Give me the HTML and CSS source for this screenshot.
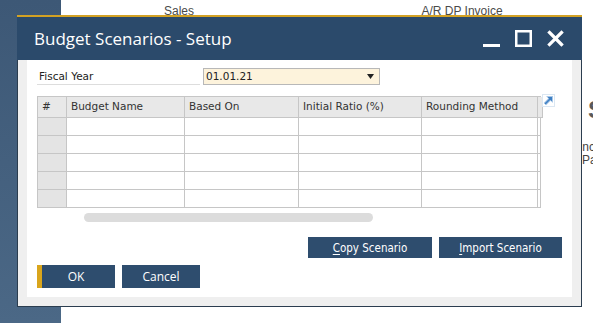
FILE: index.html
```html
<!DOCTYPE html>
<html lang="en">
<head>
    <meta charset="UTF-8">
    <meta name="viewport" content="width=device-width, initial-scale=1.0">
    <title>Budget Scenarios - Setup</title>
    <link rel="stylesheet" href="styles.css">
</head>
<body>
    <!-- background: main window behind the dialog -->
    <div class="desk">
        <div class="rail"></div>
        <div class="page">
            <div class="tabs">
                <span class="tab tab-sales">Sales</span>
                <span class="tab tab-invoice">A/R DP Invoice</span>
            </div>
            <div class="peek">
                <div class="peek-big">S</div>
                <div class="peek-line inc">Inc</div>
                <div class="peek-line">Pa</div>
            </div>
        </div>
    </div>

    <!-- dialog -->
    <div class="dialog">
        <div class="titlebar">
            <span class="title">Budget Scenarios - Setup</span>
            <div class="winctl">
                <svg class="ctl" width="17" height="17" viewBox="0 0 17 17"><rect x="0" y="14" width="17" height="3" fill="#fff"/></svg>
                <svg class="ctl" width="17" height="17" viewBox="0 0 17 17"><rect x="1.25" y="1.25" width="14.5" height="14.5" fill="none" stroke="#fff" stroke-width="2.5"/></svg>
                <svg class="ctl" width="17" height="17" viewBox="0 0 17 17"><path d="M2.5 2.5 L14.5 14.5 M14.5 2.5 L2.5 14.5" stroke="#fff" stroke-width="3.2" stroke-linecap="square"/></svg>
            </div>
        </div>

        <div class="frame">
            <div class="panel">

                <div class="fiscal">
                    <div class="fiscal-label">Fiscal Year</div>
                    <div class="combo">
                        <span>01.01.21</span>
                        <svg width="7" height="5" viewBox="0 0 7 5"><polygon points="0,0 7,0 3.5,5" fill="#222"/></svg>
                    </div>
                </div>

                <div class="grid-row">
                    <div class="grid">
                        <div class="hd">#</div>
                        <div class="hd">Budget Name</div>
                        <div class="hd">Based On</div>
                        <div class="hd">Initial Ratio (%)</div>
                        <div class="hd">Rounding Method</div>
                        <div class="hd"></div>

                        <div class="num"></div><div></div><div></div><div></div><div></div><div></div>
                        <div class="num"></div><div></div><div></div><div></div><div></div><div></div>
                        <div class="num"></div><div></div><div></div><div></div><div></div><div></div>
                        <div class="num"></div><div></div><div></div><div></div><div></div><div></div>
                        <div class="num"></div><div></div><div></div><div></div><div></div><div></div>
                    </div>
                    <svg class="expand" width="13" height="13" viewBox="0 0 13 13">
                        <rect x="0.5" y="0.5" width="12" height="12" fill="#fff" stroke="#dbe7f2"/>
                        <path d="M3 10 L9 4" stroke="#a9c7e6" stroke-width="3.4"/>
                        <polygon points="4,2 11,2 11,9" fill="#a9c7e6"/>
                        <path d="M3 10 L9 4" stroke="#3d7fc4" stroke-width="1.6"/>
                        <polygon points="5.5,3 10,3 10,7.5" fill="#3d7fc4"/>
                    </svg>
                </div>

                <div class="hscroll"></div>

                <div class="actions">
                    <button class="btn btn-wide"><u>C</u>opy Scenario</button>
                    <button class="btn btn-wide"><u>I</u>mport Scenario</button>
                </div>

                <div class="confirm">
                    <button class="btn btn-main btn-ok">OK</button>
                    <button class="btn btn-main">Cancel</button>
                </div>

            </div>
        </div>
    </div>
</body>
</html>
```

FILE: styles.css
```css
html, body{
    margin: 0;
    padding: 0;
}

body{
    width: 593px;
    height: 323px;
    overflow: hidden;
    position: relative;
    background: #fff;
}

/* background window */
.desk{
    display: flex;
    height: 323px;
}

.rail{
    width: 61px;
    flex-shrink: 0;
    background: linear-gradient(#3d5876, #4b6886);
}

.page{
    flex: 1;
    min-width: 0;
    overflow: hidden;
    background: #fff;
}

.tabs{
    display: flex;
    height: 22px;
    line-height: 22px;
    font-family: "Liberation Sans", Arial, sans-serif;
    font-size: 12px;
    color: #4a4a4a;
}

.tab{
    flex-shrink: 0;
    text-align: center;
    white-space: nowrap;
}

.tab-sales{ width: 236px; }
.tab-invoice{ width: 330px; }

.peek{
    margin-left: 518px;
    padding-top: 74px;
    font-family: "Liberation Sans", Arial, sans-serif;
    color: #444;
    white-space: nowrap;
}

.peek-big{
    margin-left: 9px;
    font-size: 24px;
    font-weight: bold;
    line-height: 28px;
    color: #5a5a5a;
}

.peek-line{
    font-size: 12px;
    line-height: 13px;
    margin-left: 3px;
}

.peek-line.inc{
    margin-top: 17px;
    margin-left: 0;
}

/* dialog */
.dialog{
    position: absolute;
    left: 17px;
    top: 15px;
    width: 565px;
    border-top: 2px solid #d3a224;
}

.titlebar{
    height: 43px;
    background: #2b4a6b;
    display: flex;
    align-items: center;
    justify-content: space-between;
    padding: 0 18px 0 17px;
}

.title{
    font-family: "Open Sans", "Noto Sans", sans-serif;
    font-size: 17px;
    color: #fff;
    white-space: nowrap;
}

.winctl{
    display: flex;
    align-items: center;
    gap: 15px;
}

.ctl{
    display: block;
}

.frame{
    background: #efefef;
    border: 1px solid #2b3d4f;
    border-top: none;
    padding: 0 9px 9px 9px;
}

.panel{
    background: #fff;
    padding: 8px 10px 9px 10px;
    font-family: "DejaVu Sans", Verdana, sans-serif;
    font-size: 10.5px;
    color: #222;
}

.fiscal{
    display: flex;
}

.fiscal-label{
    width: 161px;
    height: 16px;
    line-height: 16px;
    padding-left: 2px;
    border-bottom: 1px solid #dddddd;
}

.combo{
    margin-left: 3px;
    width: 177px;
    height: 17px;
    box-sizing: border-box;
    border: 1px solid #b8b8b8;
    background: #fdf3dc;
    display: flex;
    align-items: center;
    justify-content: space-between;
    padding: 0 5px 0 2px;
    line-height: 15px;
}

.grid-row{
    display: flex;
    align-items: flex-start;
    margin-top: 11px;
}

.grid{
    display: grid;
    grid-template-columns: 29px 118px 114px 123px 116px 3px;
    grid-template-rows: 21px repeat(5, 18px);
    border-left: 1px solid #c6c6c6;
    border-top: 1px solid #c6c6c6;
}

.grid > div{
    box-sizing: border-box;
    border-right: 1px solid #c6c6c6;
    border-bottom: 1px solid #c6c6c6;
    white-space: nowrap;
    overflow: hidden;
}

.grid .hd{
    background: #e8e8e8;
    padding-left: 4px;
    line-height: 18px;
    color: #333;
}

.grid .num{
    background: #e4e4e4;
}

.expand{
    display: block;
    margin-top: -2px;
    margin-left: 1px;
}

.hscroll{
    margin-top: 5px;
    margin-left: 47px;
    width: 289px;
    height: 9px;
    border-radius: 5px;
    background: #dcdcdc;
}

.actions{
    display: flex;
    justify-content: flex-end;
    gap: 7px;
    margin-top: 15px;
}

.btn{
    border: none;
    margin: 0;
    padding: 0;
    background: #2e4d6e;
    color: #fff;
    cursor: pointer;
}

.btn-wide{
    height: 21px;
    width: 124px;
    font-family: "DejaVu Sans Condensed", "DejaVu Sans", sans-serif;
    font-size: 11.5px;
}

.btn-wide + .btn-wide{
    width: 123px;
}

.btn u{
    text-decoration-thickness: 1px;
    text-underline-offset: 2px;
}

.confirm{
    display: flex;
    gap: 7px;
    margin-top: 7px;
}

.btn-main{
    width: 78px;
    height: 23px;
    font-family: "Open Sans", "Noto Sans", sans-serif;
    font-size: 12px;
}

.btn-ok{
    border-left: 5px solid #d9a51c;
    padding-right: 5px;
}
```
